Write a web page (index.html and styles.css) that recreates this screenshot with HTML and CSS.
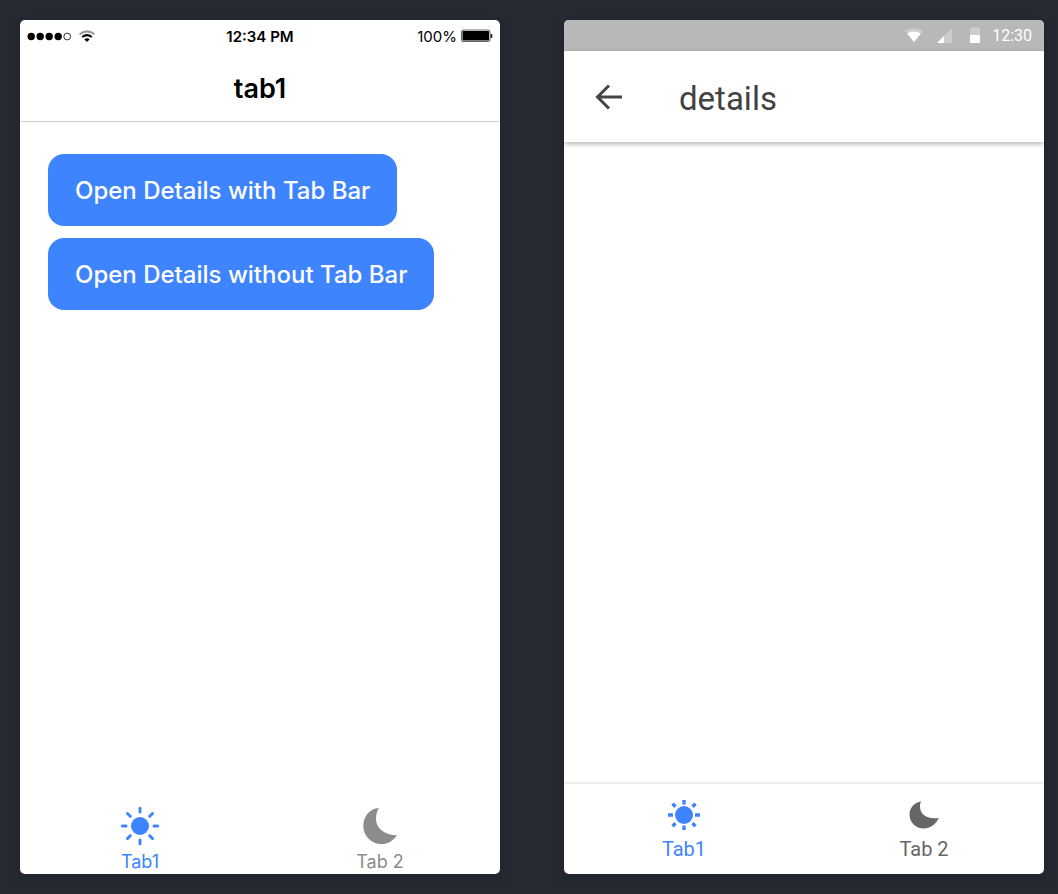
FILE: index.html
```html
<!DOCTYPE html>
<html lang="en">
<head>
<meta charset="utf-8">
<meta name="viewport" content="width=device-width, initial-scale=1">
<title>Tabs preview</title>
<link rel="stylesheet" href="styles.css">
</head>
<body>
<main class="devices">
  <section class="phone ios" aria-label="iOS">
    <div class="ios-status">
      <div class="ios-signal">
        <svg width="70" height="16" viewBox="0 0 70 16" aria-hidden="true">
          <g fill="#000"><circle cx="4.200" cy="8.500" r="3.700"/><circle cx="13.200" cy="8.500" r="3.700"/><circle cx="22.200" cy="8.500" r="3.700"/><circle cx="31.200" cy="8.500" r="3.700"/></g>
          <circle cx="40.200" cy="8.500" r="3.400" fill="none" stroke="#000" stroke-width=".8"/>
          <g fill="none" stroke-width="2">
            <path d="M52.600 6.200Q60 .6 67.400 6.200" stroke="#999"/>
            <path d="M55.200 9Q60 5.200 64.800 9" stroke="#000"/>
          </g>
          <path d="M57.300 11.300Q60 9.400 62.700 11.300L60 14z" fill="#000"/>
        </svg>
      </div>
      <time class="ios-time">12:34 PM</time>
      <div class="ios-battery">
        <span>100%</span>
        <svg width="32" height="14" viewBox="0 0 32 14" aria-hidden="true">
          <rect x=".5" y="1" width="28.500" height="11.500" rx="1.500" fill="#fff" stroke="#666"/>
          <rect x="1.500" y="2" width="26.500" height="9.500" rx=".5" fill="#000"/>
          <path d="M29.500 5h1q1 0 1 2t-1 2h-1z" fill="#222"/>
        </svg>
      </div>
    </div>
    <header class="ios-header"><h1 class="ios-title">tab1</h1></header>
    <div class="ios-content">
      <button class="action" type="button">Open Details with Tab Bar</button>
      <button class="action" type="button">Open Details without Tab Bar</button>
    </div>
    <nav class="tabs ios-tabs" aria-label="iOS tabs">
      <button class="tab active" type="button">
        <svg width="40" height="40" viewBox="0 0 40 40" aria-hidden="true">
          <circle cx="20" cy="20" r="9" fill="currentColor"/>
          <path d="M20 2.300v3.700M20 34v3.700M2.300 20H6M34 20h3.700M7.500 7.500l2.800 2.800M29.700 29.700l2.800 2.800M7.500 32.500l2.800-2.800M29.700 10.300l2.800-2.800" stroke="currentColor" stroke-width="3" stroke-linecap="round"/>
        </svg>
        <span>Tab1</span>
      </button>
      <button class="tab" type="button">
        <svg width="40" height="40" viewBox="0 0 40 40" aria-hidden="true">
          <path d="M19 2C10.300 2 3.300 10.300 3.300 20a18 18 0 0 0 18 18C28 38 33.800 34.500 36.800 29.200 25 29.200 16 22.500 16 13 16 8.600 17 4.800 19 2z" fill="currentColor"/>
        </svg>
        <span>Tab 2</span>
      </button>
    </nav>
  </section>

  <section class="phone android" aria-label="Android">
    <div class="md-status">
      <svg width="76" height="18" viewBox="0 0 76 18" aria-hidden="true">
        <path d="M0 4Q9 -2 18 4L9 15z" fill="#cdcdcd"/>
        <path d="M2.200 6.500Q9 2.500 15.800 6.500L9 15z" fill="#fff"/>
        <path d="M47 1v15H32z" fill="#cdcdcd"/>
        <path d="M39 9v7h-7z" fill="#fff"/>
        <path d="M65 1h2q0-1 1-1h4q1 0 1 1h2v8H65z" fill="#cdcdcd"/>
        <path d="M65 8h10v8H65z" fill="#fff"/>
      </svg>
      <time>12:30</time>
    </div>
    <header class="md-header">
      <button class="back" type="button" aria-label="Back">
        <svg width="28" height="28" viewBox="0 0 28 28" aria-hidden="true">
          <path d="M14 2.500L2.500 14 14 25.500M3 14h24" fill="none" stroke="#444" stroke-width="3"/>
        </svg>
      </button>
      <h1 class="md-title">details</h1>
    </header>
    <div class="md-content"></div>
    <nav class="tabs md-tabs" aria-label="Android tabs">
      <button class="tab active" type="button">
        <svg width="32" height="32" viewBox="0 0 32 32" aria-hidden="true">
          <circle cx="16" cy="16" r="9" fill="currentColor"/>
          <path d="M16 1v4.500M16 26.500V31M0 16h5M27 16h5M4.500 4.800l3 3M24.500 24.200l3 3M4.500 27.200l3-3M24.500 7.800l3-3" stroke="currentColor" stroke-width="3.400"/>
        </svg>
        <span>Tab1</span>
      </button>
      <button class="tab" type="button">
        <svg width="32" height="32" viewBox="0 0 32 32" aria-hidden="true">
          <path d="M13 2.300C6.500 3.500 1.500 9 1.500 15.500A14 14 0 0 0 15.500 29.500c7 0 12.500-4.200 15.200-10.500C20.500 20.500 12 16.500 12 7.500c0-2 .3-3.500 1-5.200z" fill="currentColor"/>
        </svg>
        <span>Tab 2</span>
      </button>
    </nav>
  </section>
</main>
</body>
</html>
```
FILE: styles.css
```css
* { box-sizing: border-box; }

body {
  margin: 0;
  background: #252a33;
  font-family: Inter, "Liberation Sans", sans-serif;
}

button {
  border: 0;
  background: none;
  padding: 0;
  font: inherit;
  color: inherit;
  cursor: pointer;
}

h1 { margin: 0; }
svg { display: block; flex: none; }

.devices {
  display: grid;
  grid-template-columns: 1fr 1fr;
  gap: 64px;
  min-height: 100vh;
  padding: 20px 14px 20px 20px;
}

.phone {
  display: flex;
  flex-direction: column;
  background: #fff;
  border-radius: 5px;
  box-shadow: 0 2px 14px rgba(0, 0, 0, 0.2);
  overflow: hidden;
}

.ios-status {
  display: grid;
  grid-template-columns: 1fr auto 1fr;
  align-items: center;
  height: 32px;
  padding: 0 7px;
  font-size: 15px;
}

.ios-time { font-weight: 600; }

.ios-battery {
  display: flex;
  align-items: center;
  justify-content: flex-end;
  gap: 4px;
}

.ios-header {
  display: flex;
  align-items: center;
  justify-content: center;
  height: 70px;
  padding-top: 4px;
  border-bottom: 1px solid #cfcfcf;
}

.ios-title {
  font-size: 27px;
  font-weight: 600;
  line-height: 32px;
}

.ios-content {
  flex: 1;
  display: flex;
  flex-direction: column;
  align-items: flex-start;
  gap: 12px;
  padding: 32px 28px;
}

.action {
  height: 72px;
  padding: 0 27px;
  border-radius: 16px;
  background: #3e84ff;
  color: #fff;
  font-size: 24px;
  font-weight: 500;
}

.tabs {
  display: grid;
  grid-template-columns: 1fr 1fr;
}

.tab {
  display: flex;
  flex-direction: column;
  align-items: center;
}

.tab.active { color: #3e84ff; }

.ios-tabs {
  color: #8c8c8c;
  font-size: 18px;
  line-height: 24px;
}

.ios-tabs .tab { gap: 4px; }

.android { font-family: Roboto, "Liberation Sans", sans-serif; }

.md-status {
  display: flex;
  align-items: center;
  justify-content: flex-end;
  gap: 11px;
  height: 31px;
  padding-right: 12px;
  background: #b8b8b8;
  color: #fff;
  font-size: 16px;
}

.md-header {
  display: flex;
  align-items: center;
  gap: 56px;
  height: 91px;
  padding: 0 31px;
  box-shadow: 0 2px 5px rgba(0, 0, 0, 0.3);
}

.md-title {
  padding-top: 4px;
  color: #424242;
  font-size: 33px;
  font-weight: 400;
}

.md-content { flex: 1; }

.md-tabs {
  height: 92px;
  padding: 15px 0 12px;
  border-top: 2px solid #ececec;
  color: #666;
  font-size: 20px;
  line-height: 24px;
}

.md-tabs .tab { gap: 6px; }
```
